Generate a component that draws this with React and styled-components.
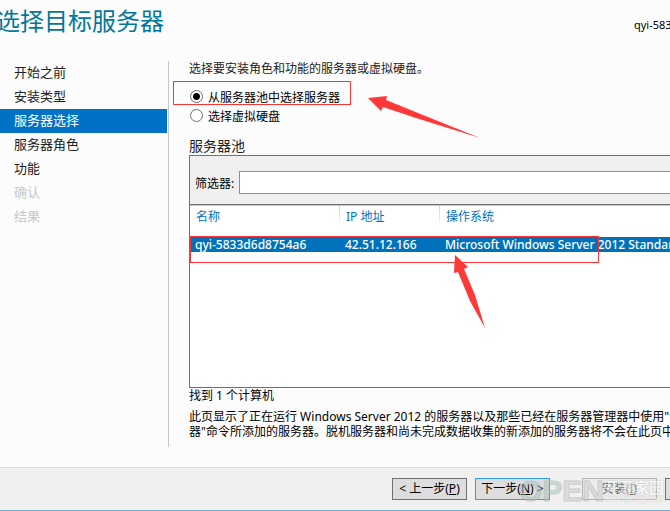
import React, { useState } from "react";
import styled, { createGlobalStyle, css } from "styled-components";

const GlobalStyle = createGlobalStyle`
    * {
        box-sizing: border-box;
    }

    body {
        margin: 0;
        overflow: hidden;
        background-color: #fcfcfc;
        color: #000;
        font-family: "Noto Sans", "Noto Sans CJK SC", sans-serif;
        font-size: 12px;
    }

    button,
    input {
        font: inherit;
    }
`;

const Wizard = styled.div`
    display: flex;
    flex-direction: column;
    min-height: 100vh;
    overflow: hidden;
    border-bottom: 1px solid #6cb0d4;
`;

const Header = styled.header`
    display: flex;
    justify-content: space-between;
    height: 61px;
    white-space: nowrap;
`;

const Title = styled.h1`
    margin: 3px 0 0 -4px;
    color: #00779c;
    font-size: 24px;
    font-weight: normal;
    line-height: 36px;
`;

const TargetName = styled.span`
    width: 36px;
    padding-top: 16px;
    font-size: 11px;
    line-height: 18px;
`;

const Body = styled.div`
    display: flex;
    flex: 1;
    padding-bottom: 20px;
`;

const Steps = styled.nav`
    flex: 0 0 169px;
    padding-right: 1px;
    border-right: 1px solid #c6c6c6;
`;

const Step = styled.a`
    display: block;
    height: 24px;
    padding-left: 14px;
    color: #222;
    font-size: 13px;
    line-height: 22px;
    text-decoration: none;

    ${({ $active }) =>
        $active &&
        css`
            background-color: #0072c6;
            color: #fff;
        `}

    ${({ $disabled }) =>
        $disabled &&
        css`
            color: #c8c8c8;
        `}
`;

const Content = styled.main`
    flex: 1;
    min-width: 0;
    padding-left: 20px;
    white-space: nowrap;
`;

const Intro = styled.p`
    margin: 0 0 11px;
    color: #222;
    line-height: 15px;
`;

const Option = styled.label`
    position: relative;
    display: flex;
    align-items: center;
    width: max-content;
    height: 19px;
    gap: 5px;
`;

const Radio = styled.input`
    appearance: none;
    width: 13px;
    height: 13px;
    margin: 0 0 0 1px;
    border: 1px solid #707070;
    border-radius: 50%;
    background-color: #fff;

    &:checked {
        background-image: radial-gradient(circle, #000 3px, transparent 4px);
    }
`;

const PoolTitle = styled.h2`
    margin: 12px 0 0;
    color: #222;
    font-size: 14px;
    font-weight: normal;
    line-height: 18px;
`;

const Pool = styled.section`
    border: 1px solid #707070;
    border-right: none;
`;

const Filter = styled.div`
    display: flex;
    align-items: center;
    height: 48px;
    padding: 5px 0 0 5px;
    gap: 5px;
    background-color: #f0f0f0;
`;

const FilterInput = styled.input`
    flex: 1;
    min-width: 0;
    height: 23px;
    border: 1px solid #8f8f8f;
    border-right: none;
    background-color: #fff;
`;

const ListArea = styled.div`
    position: relative;
    min-height: 183px;
    border-top: 1px solid #707070;
    background-color: #fff;
`;

const ServerTable = styled.table`
    width: 100%;
    border-collapse: collapse;
    border-top: 1px solid #c8c8c8;
    table-layout: fixed;
`;

const HeadCell = styled.th`
    width: ${({ $width }) => $width || "auto"};
    height: 31px;
    padding: 0 0 9px 6px;
    background: linear-gradient(#d0d0d0, #fff) right top / 1px 20px no-repeat;
    color: #0072c6;
    font-weight: normal;
    line-height: 20px;
    text-align: left;

    &:last-child {
        background: none;
    }
`;

const Cell = styled.td`
    height: 15px;
    padding: 0 0 0 5px;
    overflow: hidden;
    background-color: #0072bc;
    color: #fff;
    font-weight: 500;
    line-height: 15px;
`;

const Found = styled.p`
    margin: 0 0 5px;
    line-height: 16px;
`;

const Note = styled.p`
    margin: 0;
    line-height: 15px;
`;

const Footer = styled.footer`
    position: relative;
    display: flex;
    justify-content: flex-end;
    height: 43px;
    padding-top: 10px;
    gap: 8px;
    border-top: 1px solid #d9d9d9;
    background-color: #f0f0f0;
`;

const Button = styled.button`
    flex: none;
    width: 75px;
    height: 22px;
    padding: 0;
    border: 1px solid ${({ $primary }) => ($primary ? "#3399ff" : "#707070")};
    background-color: #ddd;
    color: #000;
    line-height: 20px;
    white-space: nowrap;

    &:disabled {
        margin-left: 24px;
        border-color: #b4b4b4;
        background-color: #ececec;
        color: #666;
    }

    &:last-of-type {
        margin-right: -70px;
    }
`;

const Marker = styled.span`
    position: absolute;
    top: ${({ $top }) => $top};
    left: ${({ $left }) => $left};
    width: ${({ $width }) => $width};
    height: ${({ $height }) => $height};
    border: 1px solid #f33;
    pointer-events: none;
`;

const Arrow = styled.svg`
    position: absolute;
    top: ${({ $top }) => $top};
    left: ${({ $left }) => $left};
    fill: #ff3838;
    pointer-events: none;
`;

const Watermark = styled.div`
    position: absolute;
    top: 6px;
    right: 6px;
    display: flex;
    align-items: center;
    height: 34px;
    opacity: 0.5;
    pointer-events: none;
`;

const Brand = styled.span`
    color: #ccc;
    font-family: "Liberation Sans", sans-serif;
    font-size: 30px;
    font-weight: bold;
    line-height: 34px;
    -webkit-text-stroke: 1px #aaa;

    em {
        color: #9ccabc;
        font-style: normal;
    }
`;

const Slogan = styled.span`
    color: #fff;
    font-size: 15px;
    font-weight: bold;
    line-height: 16px;
    text-shadow: 0 0 2px #888;

    small {
        display: block;
        font-family: "Liberation Sans", sans-serif;
        font-size: 7px;
        line-height: 8px;
    }
`;

const steps = [
    { name: "开始之前" },
    { name: "安装类型" },
    { name: "服务器选择", active: true },
    { name: "服务器角色" },
    { name: "功能" },
    { name: "确认", disabled: true },
    { name: "结果", disabled: true },
];

const App = () => {
    const [source, setSource] = useState("pool");

    return (
        <>
            <GlobalStyle />
            <Wizard>
                <Header>
                    <Title>选择目标服务器</Title>
                    <TargetName>qyi-5833d6d8754a6</TargetName>
                </Header>
                <Body>
                    <Steps>
                        {steps.map((step) => (
                            <Step
                                key={step.name}
                                href="#"
                                $active={step.active}
                                $disabled={step.disabled}
                                aria-disabled={step.disabled}
                            >
                                {step.name}
                            </Step>
                        ))}
                    </Steps>
                    <Content>
                        <Intro>选择要安装角色和功能的服务器或虚拟硬盘。</Intro>
                        <Option>
                            <Radio
                                type="radio"
                                name="source"
                                checked={source === "pool"}
                                onChange={() => setSource("pool")}
                            />
                            从服务器池中选择服务器
                            <Marker $top="-6px" $left="-16px" $width="178px" $height="24px" />
                            <Arrow $top="9px" $left="179px" width="114" height="44" viewBox="0 0 114 44">
                                <path d="M0 2 L19 0 L18 4 L50 17 L112 42 L48 22 L15 11 L13 15 Z" />
                            </Arrow>
                        </Option>
                        <Option>
                            <Radio
                                type="radio"
                                name="source"
                                checked={source === "vhd"}
                                onChange={() => setSource("vhd")}
                            />
                            选择虚拟硬盘
                        </Option>
                        <PoolTitle>服务器池</PoolTitle>
                        <Pool>
                            <Filter>
                                <label htmlFor="filter">筛选器:</label>
                                <FilterInput id="filter" type="text" />
                            </Filter>
                            <ListArea>
                                <ServerTable>
                                    <thead>
                                        <tr>
                                            <HeadCell $width="150px">名称</HeadCell>
                                            <HeadCell $width="100px">IP 地址</HeadCell>
                                            <HeadCell>操作系统</HeadCell>
                                        </tr>
                                    </thead>
                                    <tbody>
                                        <tr>
                                            <Cell>qyi-5833d6d8754a6</Cell>
                                            <Cell>42.51.12.166</Cell>
                                            <Cell>Microsoft Windows Server 2012 Standard</Cell>
                                        </tr>
                                    </tbody>
                                </ServerTable>
                                <Marker $top="31px" $left="0" $width="409px" $height="27px" />
                                <Arrow $top="50px" $left="264px" width="32" height="74" viewBox="0 0 32 74">
                                    <path d="M1 0 L14 12 L10 14 L21 40 L31 73 L16 46 L4 17 L0 18 Z" />
                                </Arrow>
                            </ListArea>
                        </Pool>
                        <Found>找到 1 个计算机</Found>
                        <Note>
                            此页显示了正在运行 Windows Server 2012 的服务器以及那些已经在服务器管理器中使用"添加服务
                            <br />
                            器"命令所添加的服务器。脱机服务器和尚未完成数据收集的新添加的服务器将不会在此页中显示。
                        </Note>
                    </Content>
                </Body>
                <Footer>
                    <Button type="button">
                        &lt; 上一步(<u>P</u>)
                    </Button>
                    <Button type="button" $primary>
                        下一步(<u>N</u>) &gt;
                    </Button>
                    <Button type="button" disabled>
                        安装(<u>I</u>)
                    </Button>
                    <Button type="button" aria-label="取消" />
                    <Watermark>
                        <Brand>
                            <em>OP</em>EN
                        </Brand>
                        <Slogan>
                            开源家园
                            <small>www.openjjg.com</small>
                        </Slogan>
                    </Watermark>
                </Footer>
            </Wizard>
        </>
    );
};

export default App;
